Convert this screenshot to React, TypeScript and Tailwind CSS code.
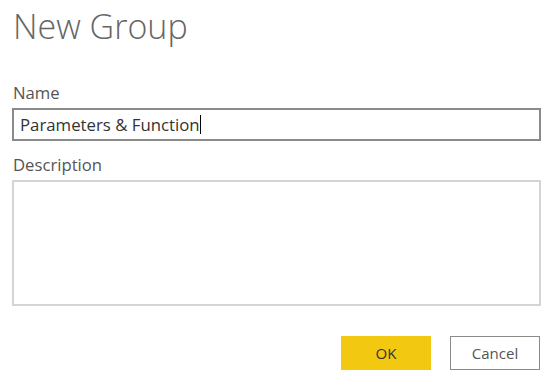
import React from "react";

export default function App() {
  return (
    <div className="w-[547px] h-[376px] bg-white pl-3 pr-[6px] pt-[6px] font-['Open_Sans',sans-serif] text-[#444]">
      <h1 className="text-[34px] font-light leading-[40px] text-[#666] ml-px">New Group</h1>

      <div className="mt-[37px] text-[16.7px] leading-[20px] text-[#555] ml-px">Name</div>
      <div className="mt-[5px] h-[33px] border-2 border-[#8a8a8a] flex items-center px-[6px]">
        <span className="text-[16.8px] text-[#333] leading-[20px]">Parameters &amp; Function</span>
        <span className="w-px h-[19px] bg-black" />
      </div>

      <div className="mt-[14px] text-[16.7px] leading-[20px] text-[#555] ml-px">Description</div>
      <div className="mt-[5px] h-[126px] border-2 border-[#d4d4d4]" />

      <div className="mt-[30px] flex justify-end gap-[19px] pr-px">
        <button className="w-[90px] h-[34px] bg-[#f2c811] text-[15px] text-[#333]">OK</button>
        <button className="w-[90px] h-[34px] bg-white border border-[#8a8a8a] text-[15px] text-[#555]">Cancel</button>
      </div>
    </div>
  );
}
